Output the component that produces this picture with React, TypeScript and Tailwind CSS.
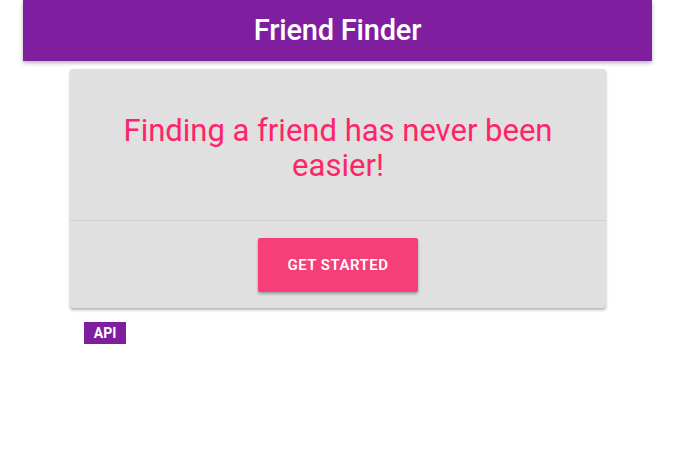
import React from "react";

export default function App() {
  return (
    <div className="min-h-[467px] bg-white" style={{ fontFamily: "Roboto, 'Liberation Sans', sans-serif" }}>
      <header className="ml-[23px] w-[629px] h-[61px] bg-[#7f1fa0] shadow-[0_2px_4px_rgba(0,0,0,0.3)] flex items-center justify-center">
        <h1 className="text-white text-[29px] font-medium tracking-[-0.2px]">Friend Finder</h1>
      </header>
      <div className="ml-[70px] mt-[8px] w-[536px] bg-[#e0e0e0] rounded-[3px] shadow-[0_2px_3px_rgba(0,0,0,0.3)]">
        <div className="h-[152px] flex items-center justify-center px-[48px] border-b border-[#d2d2d2]">
          <p className="text-center text-[#ff2468] text-[31px] leading-[35px] pt-[6px]">
            Finding a friend has never been easier!
          </p>
        </div>
        <div className="h-[87px] flex items-start justify-center pt-[17px]">
          <button className="w-[160px] h-[54px] bg-[#f63e79] rounded-[2px] text-white text-[15px] font-semibold tracking-[0.5px] shadow-[0_2px_3px_rgba(0,0,0,0.3)]">
            GET STARTED
          </button>
        </div>
      </div>
      <div className="ml-[84px] mt-[14px] w-[42px] h-[22px] bg-[#7f1fa0] text-white text-[14px] font-bold flex items-center justify-center">
        API
      </div>
    </div>
  );
}
